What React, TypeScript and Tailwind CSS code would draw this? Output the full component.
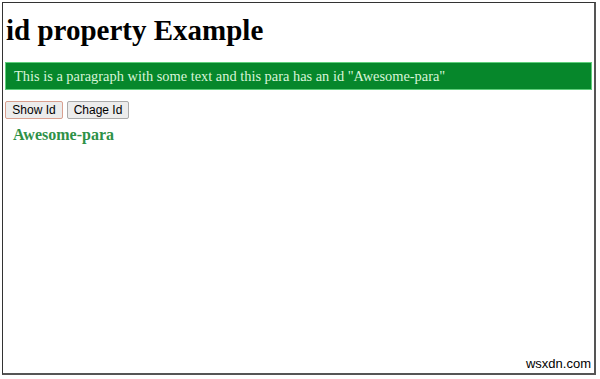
import React from 'react';

const App: React.FC = () => {
  return (
    <div className="w-[600px] h-[379px] bg-white pl-[2px] pt-[2px] relative" style={{ fontFamily: '"Liberation Serif", serif' }}>
      <div className="w-[594px] h-[373px] border border-[#333] border-r-2 border-b-2 border-r-[#555] border-b-[#555] px-[2px]">
        <h1 className="text-[29px] font-bold leading-none mt-[13px] ml-[1px] text-black">id property Example</h1>
        <p className="mt-[17px] bg-[#06872b] border border-[#5fcf7c] text-[#d8f5d8] text-[14.4px] leading-[26px] h-[28px] pl-[8px]">
          This is a paragraph with some text and this para has an id "Awesome-para"
        </p>
        <div className="mt-[11px] flex gap-[4px]" style={{ fontFamily: '"Liberation Sans", sans-serif' }}>
          <button className="h-[18px] w-[58px] text-[12px] leading-none text-black bg-[#ececec] border border-[#d9a090] rounded-[2px]">Show Id</button>
          <button className="h-[18px] w-[62px] text-[12px] leading-none text-black bg-[#ececec] border border-[#aaa] rounded-[2px]">Chage Id</button>
        </div>
        <div className="mt-[8px] ml-[8px] text-[16px] font-bold text-[#2e9147] leading-none">Awesome-para</div>
      </div>
      <div className="absolute right-[9px] bottom-[6px] text-[13px] text-black" style={{ fontFamily: '"Liberation Sans", sans-serif' }}>wsxdn.com</div>
    </div>
  );
};

export default App;
